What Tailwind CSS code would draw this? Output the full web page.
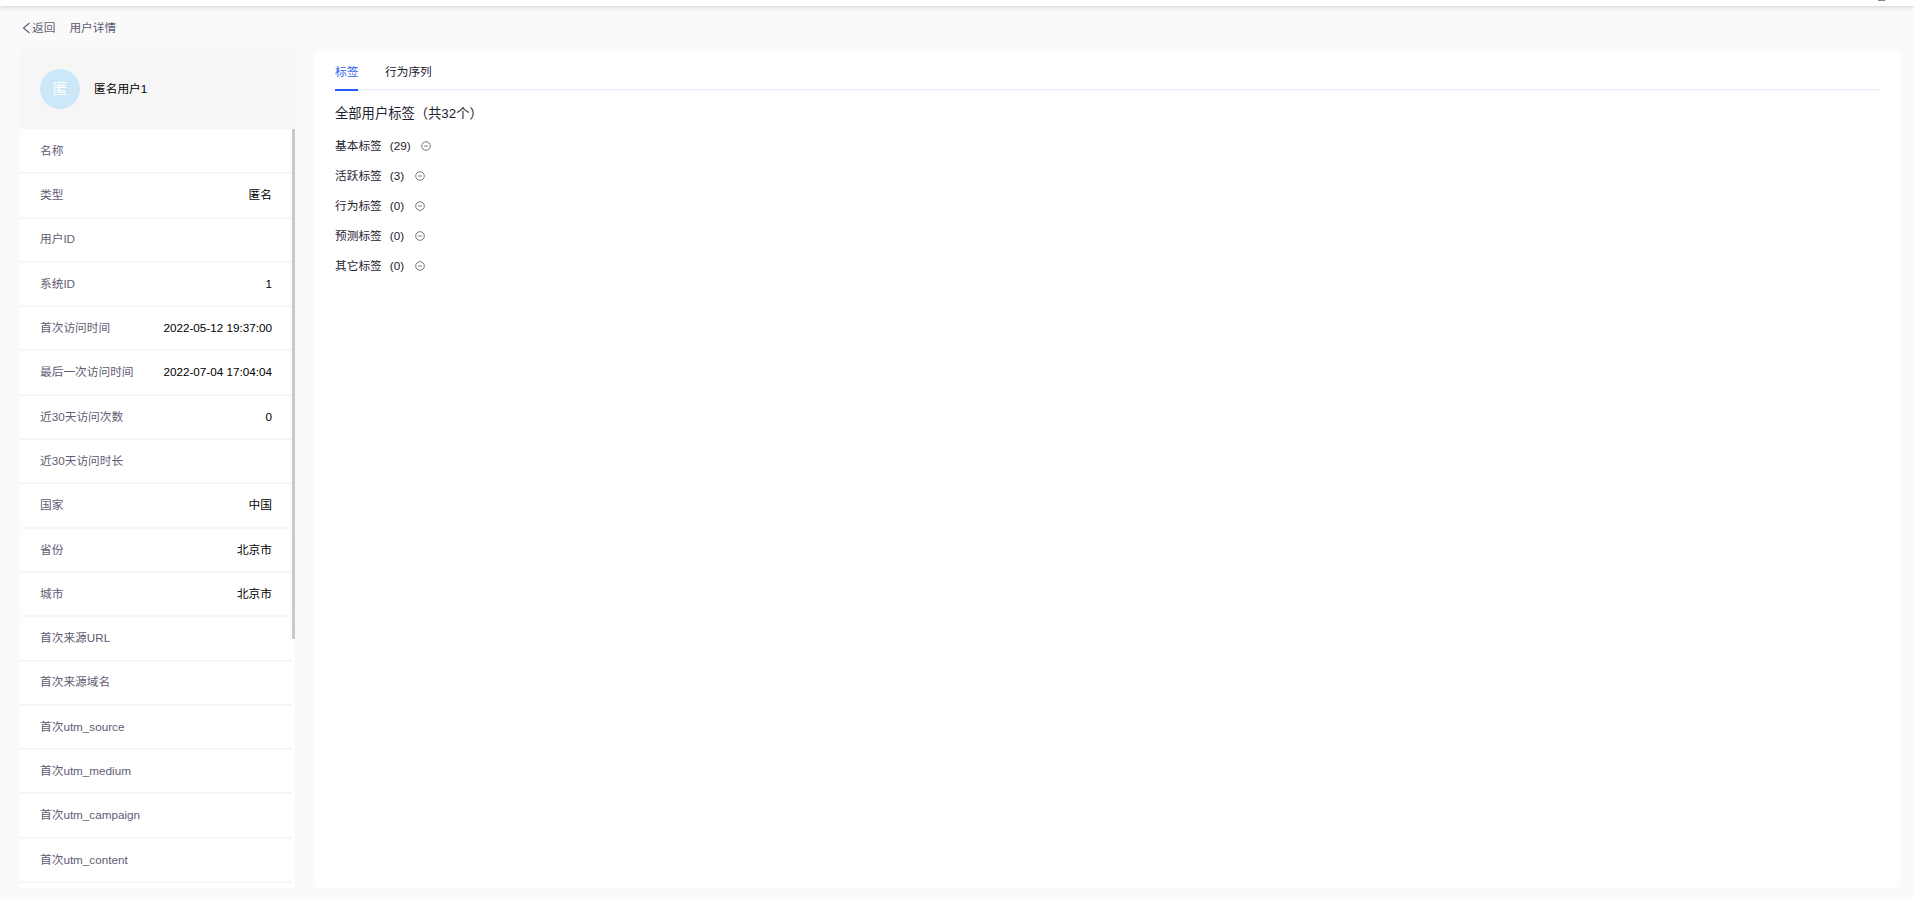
<!DOCTYPE html>
<html lang="zh">
<head>
<meta charset="utf-8">
<script src="https://cdn.jsdelivr.net/npm/@tailwindcss/browser@4"></script>
<title>用户详情</title>
</head>
<body class="m-0 overflow-hidden bg-[#fafafa] font-['Liberation_Sans','Noto_Sans_CJK_SC',sans-serif] text-[11.7px]">
<div class="flex h-[897px] w-[1914px] flex-col">
  <header class="relative z-10 h-[6px] shrink-0 bg-white shadow-[0_1px_4px_rgba(60,60,90,0.22)]">
    <div class="absolute right-[29px] top-0 h-[1px] w-[7px] bg-[#8d7f9a]"></div>
  </header>
  <div class="flex h-[43px] shrink-0 items-center pt-[1px] pl-[22px] leading-none text-[#5f5c73]">
    <svg class="mr-[1px] h-[12px] w-[9px]" viewBox="0 0 9 12" fill="none" stroke="#5f5c73" stroke-width="1.1"><path d="M7.5 1 L1.5 6 L7.5 11"/></svg>
    <span>返回</span>
    <span class="ml-[14px]">用户详情</span>
  </div>
  <main class="flex h-[839px] shrink-0 gap-[20px] pl-[20px]">
    <aside class="flex h-full w-[275px] flex-col overflow-hidden bg-white">
      <div class="flex h-[80px] shrink-0 items-center bg-[#f6f6f6] pl-[20px]">
        <div class="flex h-[40px] w-[40px] items-center justify-center rounded-full bg-[#cbe7f8] text-[15px] text-white">匿</div>
        <span class="ml-[14px] text-black">匿名用户1</span>
      </div>
      <div class="relative flex-1 overflow-hidden">
        <div class="absolute right-0 top-0 h-[510px] w-[3px] bg-[#c6c8d2]"></div>
        <div class="mt-[1px] w-[272px] text-[#5f5c73]">
          <div class="flex h-[44.31px] items-center justify-between border-b-2 border-[#f6f6f7] px-[20px] pb-[1px]"><span>名称</span></div>
          <div class="flex h-[44.31px] items-center justify-between border-b-2 border-[#f6f6f7] px-[20px] pb-[1px]"><span>类型</span><span class="text-black">匿名</span></div>
          <div class="flex h-[44.31px] items-center justify-between border-b-2 border-[#f6f6f7] px-[20px] pb-[1px]"><span>用户ID</span></div>
          <div class="flex h-[44.31px] items-center justify-between border-b-2 border-[#f6f6f7] px-[20px] pb-[1px]"><span>系统ID</span><span class="text-black">1</span></div>
          <div class="flex h-[44.31px] items-center justify-between border-b-2 border-[#f6f6f7] px-[20px] pb-[1px]"><span>首次访问时间</span><span class="text-black">2022-05-12 19:37:00</span></div>
          <div class="flex h-[44.31px] items-center justify-between border-b-2 border-[#f6f6f7] px-[20px] pb-[1px]"><span>最后一次访问时间</span><span class="text-black">2022-07-04 17:04:04</span></div>
          <div class="flex h-[44.31px] items-center justify-between border-b-2 border-[#f6f6f7] px-[20px] pb-[1px]"><span>近30天访问次数</span><span class="text-black">0</span></div>
          <div class="flex h-[44.31px] items-center justify-between border-b-2 border-[#f6f6f7] px-[20px] pb-[1px]"><span>近30天访问时长</span></div>
          <div class="flex h-[44.31px] items-center justify-between border-b-2 border-[#f6f6f7] px-[20px] pb-[1px]"><span>国家</span><span class="text-black">中国</span></div>
          <div class="flex h-[44.31px] items-center justify-between border-b-2 border-[#f6f6f7] px-[20px] pb-[1px]"><span>省份</span><span class="text-black">北京市</span></div>
          <div class="flex h-[44.31px] items-center justify-between border-b-2 border-[#f6f6f7] px-[20px] pb-[1px]"><span>城市</span><span class="text-black">北京市</span></div>
          <div class="flex h-[44.31px] items-center justify-between border-b-2 border-[#f6f6f7] px-[20px] pb-[1px]"><span>首次来源URL</span></div>
          <div class="flex h-[44.31px] items-center justify-between border-b-2 border-[#f6f6f7] px-[20px] pb-[1px]"><span>首次来源域名</span></div>
          <div class="flex h-[44.31px] items-center justify-between border-b-2 border-[#f6f6f7] px-[20px] pb-[1px]"><span>首次utm_source</span></div>
          <div class="flex h-[44.31px] items-center justify-between border-b-2 border-[#f6f6f7] px-[20px] pb-[1px]"><span>首次utm_medium</span></div>
          <div class="flex h-[44.31px] items-center justify-between border-b-2 border-[#f6f6f7] px-[20px] pb-[1px]"><span>首次utm_campaign</span></div>
          <div class="flex h-[44.31px] items-center justify-between border-b-2 border-[#f6f6f7] px-[20px] pb-[1px]"><span>首次utm_content</span></div>
        </div>
      </div>
    </aside>
    <section class="h-full w-[1585px] rounded-[6px] bg-white px-[20px] text-[#1f2230]">
      <nav class="flex h-[42px] border-b-2 border-[#edf3fc]">
        <div class="relative flex w-[23px] items-center whitespace-nowrap pt-[5px] text-[#2b63f0]">
          标签
          <div class="absolute bottom-[-2px] left-0 h-[2px] w-[23px] bg-[#1f5df5]"></div>
        </div>
        <div class="ml-[27px] flex items-center pt-[5px]">行为序列</div>
      </nav>
      <h2 class="mt-[13px] text-[13.3px] font-normal leading-[20px] text-[#1f2230]">全部用户标签（共32个）</h2>
      <ul class="mt-[7px]">
        <li class="flex h-[30px] items-center"><span>基本标签</span><span class="ml-[8px]">(29)</span><svg class="ml-[10px] h-[10px] w-[10px]" viewBox="0 0 10 10" fill="none" stroke="#777" stroke-width="1"><circle cx="5" cy="5" r="4.3"/><path d="M3.2 5h3.6"/></svg></li>
        <li class="flex h-[30px] items-center"><span>活跃标签</span><span class="ml-[8px]">(3)</span><svg class="ml-[11px] h-[10px] w-[10px]" viewBox="0 0 10 10" fill="none" stroke="#777" stroke-width="1"><circle cx="5" cy="5" r="4.3"/><path d="M3.2 5h3.6"/></svg></li>
        <li class="flex h-[30px] items-center"><span>行为标签</span><span class="ml-[8px]">(0)</span><svg class="ml-[11px] h-[10px] w-[10px]" viewBox="0 0 10 10" fill="none" stroke="#777" stroke-width="1"><circle cx="5" cy="5" r="4.3"/><path d="M3.2 5h3.6"/></svg></li>
        <li class="flex h-[30px] items-center"><span>预测标签</span><span class="ml-[8px]">(0)</span><svg class="ml-[11px] h-[10px] w-[10px]" viewBox="0 0 10 10" fill="none" stroke="#777" stroke-width="1"><circle cx="5" cy="5" r="4.3"/><path d="M3.2 5h3.6"/></svg></li>
        <li class="flex h-[30px] items-center"><span>其它标签</span><span class="ml-[8px]">(0)</span><svg class="ml-[11px] h-[10px] w-[10px]" viewBox="0 0 10 10" fill="none" stroke="#777" stroke-width="1"><circle cx="5" cy="5" r="4.3"/><path d="M3.2 5h3.6"/></svg></li>
      </ul>
    </section>
  </main>
</div>
</body>
</html>
